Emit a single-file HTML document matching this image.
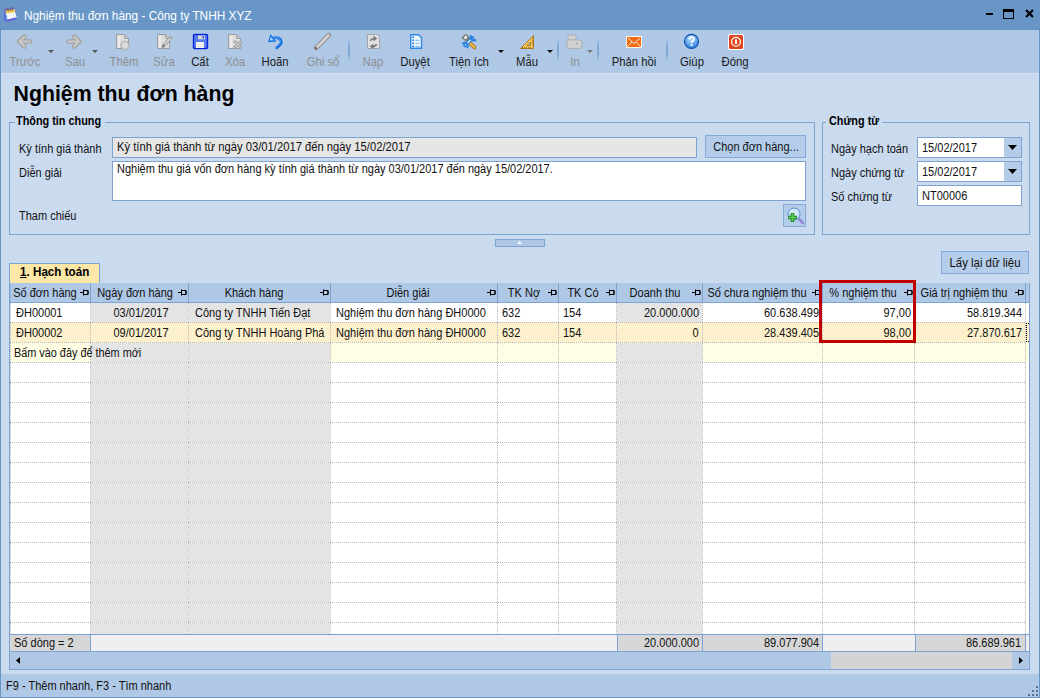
<!DOCTYPE html>
<html><head><meta charset="utf-8"><title>Nghiệm thu đơn hàng</title>
<style>
html,body{margin:0;padding:0;}
body{width:1040px;height:698px;overflow:hidden;position:relative;background:#cadbf0;font-family:"Liberation Sans", sans-serif;}
div{position:absolute;}
.t{white-space:nowrap;}
u{text-decoration:underline;}
</style></head><body>
<div style="left:0px;top:0px;width:1040px;height:30px;background:#6897c7"></div>
<div style="left:0px;top:29px;width:1040px;height:1px;background:#6192c4"></div>
<div style="left:0px;top:30px;width:1px;height:668px;background:#6897c7"></div>
<div style="left:1039px;top:30px;width:1px;height:668px;background:#6897c7"></div>
<div style="left:1px;top:30px;width:1038px;height:43px;background:#aec8e6"></div>
<div style="left:1px;top:73px;width:1038px;height:1px;background:#d2e1f3"></div>
<div style="left:1px;top:674px;width:1038px;height:23px;background:#aec8e6"></div>
<div style="left:0px;top:697px;width:1040px;height:1px;background:#6897c7"></div>
<svg style="position:absolute;left:0;top:0" width="24" height="28" viewBox="0 0 24 28">
<path d="M4 9 L14.5 7.8 L17 17.5 L16 19.5 L6.5 21.8 L4 20.5 Z" fill="#6a5ed8"/>
<path d="M5.2 10.5 L14.3 9.3 L16.8 17.3 L7.2 19.6 Z" fill="#f2f7ff"/>
<path d="M5.2 10.5 L14.3 9.3 L15 12.2 L5.8 13.4 Z" fill="#f6cc40"/>
<path d="M5.2 10.5 L7.2 19.6 L6.5 21 L4.8 20 Z" fill="#4a8ce0"/>
<path d="M6.6 11.5 V8.6 Q7.5 7 8.4 8.6 V11.2 M10.6 11 V8.3 Q11.5 6.8 12.4 8.3 V10.8" stroke="#6e6e6e" stroke-width="1.1" fill="none"/>
</svg>
<div class="t" style="left:24px;top:9.92px;font-size:12.5px;line-height:12.5px;color:#fff;transform:scaleX(0.945);transform-origin:0 0;">Nghiệm thu đơn hàng - Công ty TNHH XYZ</div>
<div style="left:986px;top:13px;width:7px;height:2px;background:#000"></div>
<div style="left:1003px;top:9px;width:11px;height:10px;border:1px solid #000;border-top-width:3px;box-sizing:border-box"></div>
<svg style="position:absolute;left:1025px;top:9px" width="9" height="9" viewBox="0 0 9 9">
<path d="M1 1 L8 8 M8 1 L1 8" stroke="#000" stroke-width="2.2"/></svg>
<svg style="position:absolute;left:0;top:0" width="1040" height="73" viewBox="0 0 1040 73"><g transform="translate(16.5,34)"><path d="M13.5 7.5 H3 M8 2.5 L2.5 7.5 L8 12.5" stroke="#a3a3a3" stroke-width="4.4" stroke-linecap="round" stroke-linejoin="round" fill="none"/><path d="M13.5 7.5 H3.5 M8 2.8 L3 7.5 L8 12.2" stroke="#c9c9c9" stroke-width="2" stroke-linecap="round" stroke-linejoin="round" fill="none"/></g><g transform="translate(82,34) scale(-1,1)"><path d="M13.5 7.5 H3 M8 2.5 L2.5 7.5 L8 12.5" stroke="#a3a3a3" stroke-width="4.4" stroke-linecap="round" stroke-linejoin="round" fill="none"/><path d="M13.5 7.5 H3.5 M8 2.8 L3 7.5 L8 12.2" stroke="#c9c9c9" stroke-width="2" stroke-linecap="round" stroke-linejoin="round" fill="none"/></g><path d="M116.5 34.5 H124.5 L128.5 38.5 V48.5 H116.5 Z" fill="#dedede" stroke="#9c9c9c"/><path d="M124.5 34.5 V38.5 H128.5" fill="#c4c4c4" stroke="#9c9c9c" stroke-width="0.8"/><rect x="118" y="36" width="2" height="11" fill="#ececec"/><circle cx="125" cy="45.5" r="4.2" fill="#cfcfcf" stroke="#a8a8a8" stroke-width="1.2" stroke-dasharray="1.6 1"/><circle cx="125" cy="45.5" r="2.6" fill="#dcdcdc"/><path d="M157.5 34.5 H165.5 L169.5 38.5 V48.5 H157.5 Z" fill="#dedede" stroke="#9c9c9c"/><path d="M165.5 34.5 V38.5 H169.5" fill="#c4c4c4" stroke="#9c9c9c" stroke-width="0.8"/><rect x="159" y="36" width="2" height="11" fill="#ececec"/><path d="M163 46.5 L170.5 38" stroke="#9a9a9a" stroke-width="3.4" stroke-linecap="round"/><path d="M163.3 46 L170.3 38.3" stroke="#d8d8d8" stroke-width="1.6" stroke-linecap="round"/><circle cx="163.5" cy="45.5" r="0.9" fill="#555"/><rect x="193.5" y="34.5" width="14" height="14" rx="1" fill="#5a7cf0" stroke="#0a24d8" stroke-width="1.4"/><rect x="198" y="35.5" width="7" height="3.8" fill="#d8d8d4"/><rect x="202.5" y="36.2" width="1.6" height="2.2" fill="#2040e0"/><rect x="196" y="42" width="8" height="6" fill="#f0f0ee"/><path d="M228.5 34.5 H236.5 L240.5 38.5 V48.5 H228.5 Z" fill="#dedede" stroke="#9c9c9c"/><path d="M236.5 34.5 V38.5 H240.5" fill="#c4c4c4" stroke="#9c9c9c" stroke-width="0.8"/><rect x="230" y="36" width="2" height="11" fill="#ececec"/><path d="M234 41 L241.5 48 M241.5 41 L234 48" stroke="#9c9c9c" stroke-width="3"/><path d="M234.5 41.5 L241 47.5 M241 41.5 L234.5 47.5" stroke="#cacaca" stroke-width="1.2"/><path d="M272.5 38.5 Q275 37.3 277.5 37.8 Q281.3 38.8 281.3 42.3 Q281.3 44.5 276.8 47.8" stroke="#1a72e0" stroke-width="2.8" fill="none" stroke-linecap="round"/><path d="M272.8 38.3 Q275 37.6 277.5 38.2 Q280.3 39 280.5 42" stroke="#5aa8f8" stroke-width="1" fill="none"/><path d="M268 42.3 L270.6 34 L276.3 41.5 Z" fill="#1a72e0"/><path d="M269.8 40.6 L270.9 36.6 L273.5 40.3 Z" fill="#a8d4ff"/><path d="M316 48 L329 35" stroke="#9a9a9a" stroke-width="4.6" stroke-linecap="round"/><path d="M316.5 47.5 L328.5 35.5" stroke="#d6d6d6" stroke-width="2.4" stroke-linecap="round"/><path d="M315 49 L317.5 48.5 L315.5 46.5 Z" fill="#444"/><path d="M367.5 34.5 H377 L379.5 37 V48.5 H367.5 Z" fill="#e0e0e0" stroke="#a4a4a4"/><path d="M370.5 41 Q371 38.5 375 38.5 M373.5 36.5 L376 38.5 L373.5 40.5 M376.5 44 Q376 46.5 372 46.5 M373.5 44.5 L371 46.5 L373.5 48" stroke="#7a7a7a" stroke-width="1.6" fill="none"/><path d="M410.7 34.7 H418.5 L421.5 37.7 V48.3 H410.7 Z" fill="#eef7ff" stroke="#2e8ae0" stroke-width="1.4"/><path d="M412.3 37.2h1.8M412.3 40.2h1.8M412.3 43.2h1.8M412.3 46.2h1.8" stroke="#1c78d8" stroke-width="1.6"/><path d="M415.5 40.3h4M415.5 43.3h4M415.5 46.3h4" stroke="#7ab8f0" stroke-width="1"/><path d="M467.5 40.5 L474.5 47.5" stroke="#a86a10" stroke-width="3.6" stroke-linecap="round"/><path d="M467.5 40.5 L474.5 47.5" stroke="#f2c040" stroke-width="1.8" stroke-linecap="round"/><path d="M461.5 38 L465 34 L468.5 35.5 L470 39 L466.5 42 Z" fill="#7a7a7a"/><path d="M463.5 38 L465.5 35.5 L467.5 36.5 L466 39.5 Z" fill="#f0f0f0"/><path d="M465 45.5 L472.5 38" stroke="#2a7fe0" stroke-width="3.6" stroke-linecap="round"/><path d="M465.2 45.3 L472.3 38.2" stroke="#c8ecff" stroke-width="1.6"/><path d="M471.5 35.5 A3 3 0 1 0 476 39.5" stroke="#2a7fe0" stroke-width="2" fill="none"/><path d="M467 48 A3 3 0 1 0 462.2 44" stroke="#2a7fe0" stroke-width="2" fill="none"/><path d="M520.5 48.5 L533.5 35.5 V48.5 Z" fill="#f2c350" stroke="#b07820" stroke-width="1"/><path d="M527 45.5 L530.5 42 V45.5 Z" fill="#aec8e6" stroke="#a06a18" stroke-width="0.8"/><path d="M522.5 48.5v-1.4M524.5 48.5v-1.4M526.5 48.5v-1.4M528.5 48.5v-1.4M530.5 48.5v-1.4M533.5 38.5h-1.4M533.5 40.5h-1.4M533.5 42.5h-1.4M533.5 44.5h-1.4" stroke="#9a6418" stroke-width="0.9"/><rect x="568" y="35" width="8" height="5" rx="1" fill="#d2d2d2" stroke="#aaa" stroke-width="0.8"/><path d="M568.5 40 H579 Q582 40 582 43 V46.5 Q582 48.5 580 48.5 H569.5 Q567 48.5 567 46 V42 Q567 40 568.5 40 Z" fill="#d0d0d0" stroke="#aaa" stroke-width="0.8"/><circle cx="576.5" cy="43.5" r="0.8" fill="#999"/><rect x="626" y="36" width="16" height="12" fill="#fff6ee"/><rect x="627" y="37" width="14" height="10" fill="#f06c14"/><path d="M628 38 L634 43.5 L640 38 M627.5 46.5 L632 42 M640.5 46.5 L636 42" stroke="#fff3e8" stroke-width="0.9" fill="none"/><defs><radialGradient id="hg" cx="45%" cy="30%" r="70%"><stop offset="0" stop-color="#b8e0ff"/><stop offset="1" stop-color="#3280e0"/></radialGradient></defs><circle cx="691.5" cy="41.4" r="7" fill="url(#hg)" stroke="#0a4eb0" stroke-width="1.2"/><path d="M689.2 39.3 Q689.2 37 691.6 37 Q694 37 694 39.1 Q694 40.5 692.3 41.3 Q691.6 41.7 691.6 43" stroke="#fff" stroke-width="1.7" fill="none"/><rect x="690.7" y="44.2" width="1.8" height="1.8" fill="#fff"/><rect x="728" y="34" width="16" height="16" rx="1.5" fill="#fff"/><rect x="729" y="35" width="14" height="14" rx="1.5" fill="#e0461e"/><circle cx="736" cy="41.8" r="4.4" fill="none" stroke="#fff" stroke-width="1.2"/><rect x="735" y="39.3" width="2" height="4.6" fill="#fff"/></svg>
<div class="t" style="left:-175.3px;width:400px;text-align:center;top:55.99px;font-size:12.3px;line-height:12.3px;color:#8f8f8f;transform:scaleX(0.92);transform-origin:50% 0;">Trước</div>
<div class="t" style="left:-125px;width:400px;text-align:center;top:55.99px;font-size:12.3px;line-height:12.3px;color:#8f8f8f;transform:scaleX(0.92);transform-origin:50% 0;">Sau</div>
<div class="t" style="left:-75.6px;width:400px;text-align:center;top:55.99px;font-size:12.3px;line-height:12.3px;color:#8f8f8f;transform:scaleX(0.92);transform-origin:50% 0;">Thêm</div>
<div class="t" style="left:-35.599999999999994px;width:400px;text-align:center;top:55.99px;font-size:12.3px;line-height:12.3px;color:#8f8f8f;transform:scaleX(0.92);transform-origin:50% 0;">Sửa</div>
<div class="t" style="left:-0.5px;width:400px;text-align:center;top:55.99px;font-size:12.3px;line-height:12.3px;color:#1b1b1b;transform:scaleX(0.92);transform-origin:50% 0;">Cất</div>
<div class="t" style="left:34.75px;width:400px;text-align:center;top:55.99px;font-size:12.3px;line-height:12.3px;color:#8f8f8f;transform:scaleX(0.92);transform-origin:50% 0;">Xóa</div>
<div class="t" style="left:75px;width:400px;text-align:center;top:55.99px;font-size:12.3px;line-height:12.3px;color:#1b1b1b;transform:scaleX(0.92);transform-origin:50% 0;">Hoãn</div>
<div class="t" style="left:122.5px;width:400px;text-align:center;top:55.99px;font-size:12.3px;line-height:12.3px;color:#8f8f8f;transform:scaleX(0.92);transform-origin:50% 0;">Ghi sổ</div>
<div class="t" style="left:173px;width:400px;text-align:center;top:55.99px;font-size:12.3px;line-height:12.3px;color:#8f8f8f;transform:scaleX(0.92);transform-origin:50% 0;">Nạp</div>
<div class="t" style="left:215.25px;width:400px;text-align:center;top:55.99px;font-size:12.3px;line-height:12.3px;color:#1b1b1b;transform:scaleX(0.92);transform-origin:50% 0;">Duyệt</div>
<div class="t" style="left:269.25px;width:400px;text-align:center;top:55.99px;font-size:12.3px;line-height:12.3px;color:#1b1b1b;transform:scaleX(0.92);transform-origin:50% 0;">Tiện ích</div>
<div class="t" style="left:326.9px;width:400px;text-align:center;top:55.99px;font-size:12.3px;line-height:12.3px;color:#1b1b1b;transform:scaleX(0.92);transform-origin:50% 0;">Mẫu</div>
<div class="t" style="left:374.5px;width:400px;text-align:center;top:55.99px;font-size:12.3px;line-height:12.3px;color:#8f8f8f;transform:scaleX(0.92);transform-origin:50% 0;">In</div>
<div class="t" style="left:434.25px;width:400px;text-align:center;top:55.99px;font-size:12.3px;line-height:12.3px;color:#1b1b1b;transform:scaleX(0.92);transform-origin:50% 0;">Phản hồi</div>
<div class="t" style="left:492.25px;width:400px;text-align:center;top:55.99px;font-size:12.3px;line-height:12.3px;color:#1b1b1b;transform:scaleX(0.92);transform-origin:50% 0;">Giúp</div>
<div class="t" style="left:535.1px;width:400px;text-align:center;top:55.99px;font-size:12.3px;line-height:12.3px;color:#1b1b1b;transform:scaleX(0.92);transform-origin:50% 0;">Đóng</div>
<svg style="position:absolute;left:48px;top:50px" width="6" height="3" viewBox="0 0 6 3"><path d="M0 0 H6 L3 3 Z" fill="#555"/></svg>
<svg style="position:absolute;left:92px;top:50px" width="6" height="3" viewBox="0 0 6 3"><path d="M0 0 H6 L3 3 Z" fill="#555"/></svg>
<svg style="position:absolute;left:498px;top:50px" width="6" height="3" viewBox="0 0 6 3"><path d="M0 0 H6 L3 3 Z" fill="#111"/></svg>
<svg style="position:absolute;left:547px;top:50px" width="6" height="3" viewBox="0 0 6 3"><path d="M0 0 H6 L3 3 Z" fill="#111"/></svg>
<svg style="position:absolute;left:587px;top:50px" width="6" height="3" viewBox="0 0 6 3"><path d="M0 0 H6 L3 3 Z" fill="#777"/></svg>
<div style="left:348px;top:39px;width:2px;height:22px;background:linear-gradient(#aec8e6,#7ea8d8 30%,#7ea8d8 70%,#aec8e6)"></div>
<div style="left:557px;top:39px;width:2px;height:22px;background:linear-gradient(#aec8e6,#7ea8d8 30%,#7ea8d8 70%,#aec8e6)"></div>
<div style="left:597px;top:39px;width:2px;height:22px;background:linear-gradient(#aec8e6,#7ea8d8 30%,#7ea8d8 70%,#aec8e6)"></div>
<div style="left:666px;top:39px;width:2px;height:22px;background:linear-gradient(#aec8e6,#7ea8d8 30%,#7ea8d8 70%,#aec8e6)"></div>
<div class="t" style="left:13.5px;top:83.97px;font-size:21.3px;line-height:21.3px;color:#000;font-weight:bold;">Nghiệm thu đơn hàng</div>
<div style="left:9px;top:122px;width:806px;height:113px;border:1px solid #7da4d3;box-sizing:border-box"></div>
<div style="left:15px;top:116px;width:90px;height:10px;background:#cadbf0"></div>
<div class="t" style="left:16.3px;top:114.84px;font-size:12px;line-height:12px;color:#000;font-weight:bold;transform:scaleX(0.905);transform-origin:0 0;">Thông tin chung</div>
<div class="t" style="left:18.8px;top:142.84px;font-size:12px;line-height:12px;color:#111;transform:scaleX(0.917);transform-origin:0 0;">Kỳ tính giá thành</div>
<div class="t" style="left:18.6px;top:166.84px;font-size:12px;line-height:12px;color:#111;transform:scaleX(0.917);transform-origin:0 0;">Diễn giải</div>
<div class="t" style="left:18.6px;top:209.84px;font-size:12px;line-height:12px;color:#111;transform:scaleX(0.917);transform-origin:0 0;">Tham chiếu</div>
<div style="left:112px;top:137px;width:585px;height:21px;background:#e6e6e6;border:1px solid #7fa2cf;box-sizing:border-box"></div>
<div class="t" style="left:116.5px;top:140.84px;font-size:12px;line-height:12px;color:#111;transform:scaleX(0.936);transform-origin:0 0;">Kỳ tính giá thành từ ngày 03/01/2017 đến ngày 15/02/2017</div>
<div style="left:705px;top:135px;width:101px;height:23px;background:#b4cdea;border:1px solid #84a9d8;box-sizing:border-box"></div>
<div class="t" style="left:555.5px;width:400px;text-align:center;top:140.84px;font-size:12px;line-height:12px;color:#111;transform:scaleX(0.917);transform-origin:50% 0;">Chọn đơn hàng...</div>
<div style="left:112px;top:161px;width:694px;height:40px;background:#fff;border:1px solid #7fa2cf;box-sizing:border-box"></div>
<div class="t" style="left:116.5px;top:162.84px;font-size:12px;line-height:12px;color:#111;transform:scaleX(0.915);transform-origin:0 0;">Nghiệm thu giá vốn đơn hàng kỳ tính giá thành từ ngày 03/01/2017 đến ngày 15/02/2017.</div>
<div style="left:783px;top:204px;width:23px;height:23px;background:#b4cdea;border:1px solid #84a9d8;box-sizing:border-box"></div>
<svg style="position:absolute;left:780px;top:200px" width="30" height="30" viewBox="780 200 30 30">
<path d="M798.5 218.5 L803 223" stroke="#9a88d8" stroke-width="2.6" stroke-linecap="round"/>
<circle cx="794" cy="214" r="6" fill="#cfe6fb" stroke="#5b8fd0" stroke-width="1"/>
<path d="M788 217.5h9M792.5 213v9" stroke="#1f8a2a" stroke-width="3.6"/>
<path d="M788.8 217.5h7.4M792.5 213.8v7.4" stroke="#5fd05a" stroke-width="1.6"/>
</svg>
<div style="left:822px;top:122px;width:208px;height:113px;border:1px solid #7da4d3;box-sizing:border-box"></div>
<div style="left:826px;top:116px;width:56px;height:10px;background:#cadbf0"></div>
<div class="t" style="left:829px;top:114.84px;font-size:12px;line-height:12px;color:#000;font-weight:bold;transform:scaleX(0.905);transform-origin:0 0;">Chứng từ</div>
<div class="t" style="left:831px;top:142.84px;font-size:12px;line-height:12px;color:#111;transform:scaleX(0.917);transform-origin:0 0;">Ngày hạch toán</div>
<div class="t" style="left:831px;top:166.84px;font-size:12px;line-height:12px;color:#111;transform:scaleX(0.917);transform-origin:0 0;">Ngày chứng từ</div>
<div class="t" style="left:831px;top:190.84px;font-size:12px;line-height:12px;color:#111;transform:scaleX(0.917);transform-origin:0 0;">Số chứng từ</div>
<div style="left:917px;top:137px;width:105px;height:21px;background:#fff;border:1px solid #7fa2cf;box-sizing:border-box"></div>
<div style="left:1004px;top:138px;width:17px;height:19px;background:#b4cce8"></div>
<svg style="position:absolute;left:1008px;top:145px" width="9" height="5" viewBox="0 0 9 5"><path d="M0 0H9L4.5 5Z" fill="#000"/></svg>
<div class="t" style="left:922px;top:141.84px;font-size:12px;line-height:12px;color:#111;transform:scaleX(0.917);transform-origin:0 0;">15/02/2017</div>
<div style="left:917px;top:161px;width:105px;height:21px;background:#fff;border:1px solid #7fa2cf;box-sizing:border-box"></div>
<div style="left:1004px;top:162px;width:17px;height:19px;background:#b4cce8"></div>
<svg style="position:absolute;left:1008px;top:169px" width="9" height="5" viewBox="0 0 9 5"><path d="M0 0H9L4.5 5Z" fill="#000"/></svg>
<div class="t" style="left:922px;top:165.84px;font-size:12px;line-height:12px;color:#111;transform:scaleX(0.917);transform-origin:0 0;">15/02/2017</div>
<div style="left:917px;top:185px;width:105px;height:21px;background:#fff;border:1px solid #7fa2cf;box-sizing:border-box"></div>
<div class="t" style="left:922px;top:189.84px;font-size:12px;line-height:12px;color:#111;transform:scaleX(0.917);transform-origin:0 0;">NT00006</div>
<div style="left:495px;top:239px;width:50px;height:8px;background:#aec8e6;border:1px solid #7da4d3;box-sizing:border-box"></div>
<svg style="position:absolute;left:517px;top:241px" width="5" height="3" viewBox="0 0 5 3"><path d="M0 3H5L2.5 0Z" fill="#fff"/></svg>
<div style="left:941px;top:251px;width:88px;height:23px;background:#b4cdea;border:1px solid #84a9d8;box-sizing:border-box"></div>
<div class="t" style="left:784.5px;width:400px;text-align:center;top:256.84px;font-size:12px;line-height:12px;color:#111;transform:scaleX(0.95);transform-origin:50% 0;">Lấy lại dữ liệu</div>
<div style="left:9px;top:263px;width:91px;height:21px;background:#fde7a6;border:1px solid #7da4d3;border-bottom:none;box-sizing:border-box"></div>
<div class="t" style="left:20.3px;top:265.93px;font-size:12.6px;line-height:12.6px;color:#000;font-weight:bold;transform:scaleX(0.925);transform-origin:0 0;"><u>1</u>. Hạch toán</div>
<div style="left:9px;top:283px;width:1021px;height:387px;border:1px solid #7da4d3;box-sizing:border-box;background:#fff"></div>
<div style="left:10px;top:283px;width:1019px;height:19px;background:#aec8e6"></div>
<div style="left:10px;top:302px;width:1019px;height:1px;background:#7da4d3"></div>
<div class="t" style="left:-155.3px;width:400px;text-align:center;top:286.84px;font-size:12px;line-height:12px;color:#111;transform:scaleX(0.917);transform-origin:50% 0;">Số đơn hàng</div>
<svg style="position:absolute;left:80px;top:288px" width="9" height="9" viewBox="0 0 9 9"><path d="M0 4.5H3M3.5 1.5V7.5M3.5 2.5H8V6.5H3.5M8 2.5V6.5" stroke="#000" stroke-width="1" fill="none"/></svg>
<div style="left:90px;top:283px;width:1px;height:19px;background:#7da4d3"></div>
<div class="t" style="left:-65.0px;width:400px;text-align:center;top:286.84px;font-size:12px;line-height:12px;color:#111;transform:scaleX(0.917);transform-origin:50% 0;">Ngày đơn hàng</div>
<svg style="position:absolute;left:178px;top:288px" width="9" height="9" viewBox="0 0 9 9"><path d="M0 4.5H3M3.5 1.5V7.5M3.5 2.5H8V6.5H3.5M8 2.5V6.5" stroke="#000" stroke-width="1" fill="none"/></svg>
<div style="left:188px;top:283px;width:1px;height:19px;background:#7da4d3"></div>
<div class="t" style="left:54.400000000000006px;width:400px;text-align:center;top:286.84px;font-size:12px;line-height:12px;color:#111;transform:scaleX(0.917);transform-origin:50% 0;">Khách hàng</div>
<svg style="position:absolute;left:320px;top:288px" width="9" height="9" viewBox="0 0 9 9"><path d="M0 4.5H3M3.5 1.5V7.5M3.5 2.5H8V6.5H3.5M8 2.5V6.5" stroke="#000" stroke-width="1" fill="none"/></svg>
<div style="left:330px;top:283px;width:1px;height:19px;background:#7da4d3"></div>
<div class="t" style="left:208.0px;width:400px;text-align:center;top:286.84px;font-size:12px;line-height:12px;color:#111;transform:scaleX(0.917);transform-origin:50% 0;">Diễn giải</div>
<svg style="position:absolute;left:487px;top:288px" width="9" height="9" viewBox="0 0 9 9"><path d="M0 4.5H3M3.5 1.5V7.5M3.5 2.5H8V6.5H3.5M8 2.5V6.5" stroke="#000" stroke-width="1" fill="none"/></svg>
<div style="left:497px;top:283px;width:1px;height:19px;background:#7da4d3"></div>
<div class="t" style="left:323.5px;width:400px;text-align:center;top:286.84px;font-size:12px;line-height:12px;color:#111;transform:scaleX(0.917);transform-origin:50% 0;">TK Nợ</div>
<svg style="position:absolute;left:548px;top:288px" width="9" height="9" viewBox="0 0 9 9"><path d="M0 4.5H3M3.5 1.5V7.5M3.5 2.5H8V6.5H3.5M8 2.5V6.5" stroke="#000" stroke-width="1" fill="none"/></svg>
<div style="left:558px;top:283px;width:1px;height:19px;background:#7da4d3"></div>
<div class="t" style="left:383.20000000000005px;width:400px;text-align:center;top:286.84px;font-size:12px;line-height:12px;color:#111;transform:scaleX(0.917);transform-origin:50% 0;">TK Có</div>
<svg style="position:absolute;left:606px;top:288px" width="9" height="9" viewBox="0 0 9 9"><path d="M0 4.5H3M3.5 1.5V7.5M3.5 2.5H8V6.5H3.5M8 2.5V6.5" stroke="#000" stroke-width="1" fill="none"/></svg>
<div style="left:616px;top:283px;width:1px;height:19px;background:#7da4d3"></div>
<div class="t" style="left:454.5px;width:400px;text-align:center;top:286.84px;font-size:12px;line-height:12px;color:#111;transform:scaleX(0.917);transform-origin:50% 0;">Doanh thu</div>
<svg style="position:absolute;left:692px;top:288px" width="9" height="9" viewBox="0 0 9 9"><path d="M0 4.5H3M3.5 1.5V7.5M3.5 2.5H8V6.5H3.5M8 2.5V6.5" stroke="#000" stroke-width="1" fill="none"/></svg>
<div style="left:702px;top:283px;width:1px;height:19px;background:#7da4d3"></div>
<div class="t" style="left:557.0px;width:400px;text-align:center;top:286.84px;font-size:12px;line-height:12px;color:#111;transform:scaleX(0.917);transform-origin:50% 0;">Số chưa nghiệm thu</div>
<svg style="position:absolute;left:812px;top:288px" width="9" height="9" viewBox="0 0 9 9"><path d="M0 4.5H3M3.5 1.5V7.5M3.5 2.5H8V6.5H3.5M8 2.5V6.5" stroke="#000" stroke-width="1" fill="none"/></svg>
<div style="left:822px;top:283px;width:1px;height:19px;background:#7da4d3"></div>
<div class="t" style="left:662.8px;width:400px;text-align:center;top:286.84px;font-size:12px;line-height:12px;color:#111;transform:scaleX(0.917);transform-origin:50% 0;">% nghiệm thu</div>
<svg style="position:absolute;left:904px;top:288px" width="9" height="9" viewBox="0 0 9 9"><path d="M0 4.5H3M3.5 1.5V7.5M3.5 2.5H8V6.5H3.5M8 2.5V6.5" stroke="#000" stroke-width="1" fill="none"/></svg>
<div style="left:914px;top:283px;width:1px;height:19px;background:#7da4d3"></div>
<div class="t" style="left:763.9px;width:400px;text-align:center;top:286.84px;font-size:12px;line-height:12px;color:#111;transform:scaleX(0.917);transform-origin:50% 0;">Giá trị nghiệm thu</div>
<svg style="position:absolute;left:1015px;top:288px" width="9" height="9" viewBox="0 0 9 9"><path d="M0 4.5H3M3.5 1.5V7.5M3.5 2.5H8V6.5H3.5M8 2.5V6.5" stroke="#000" stroke-width="1" fill="none"/></svg>
<div style="left:1025px;top:283px;width:1px;height:19px;background:#7da4d3"></div>
<div style="left:10px;top:303px;width:1019px;height:19px;background:#fff"></div>
<div style="left:91px;top:303px;width:97px;height:19px;background:#e4e4e4"></div>
<div style="left:189px;top:303px;width:141px;height:19px;background:#e4e4e4"></div>
<div style="left:617px;top:303px;width:85px;height:19px;background:#e4e4e4"></div>
<div style="left:10px;top:322px;width:1019px;height:21px;background:#fdf0cc"></div>
<div style="left:10px;top:342px;width:1019px;height:20px;background:#fffde4"></div>
<div style="left:91px;top:343px;width:97px;height:19px;background:#e4e4e4"></div>
<div style="left:189px;top:343px;width:141px;height:19px;background:#e4e4e4"></div>
<div style="left:617px;top:343px;width:85px;height:19px;background:#e4e4e4"></div>
<div style="left:10px;top:362px;width:1019px;height:20px;background:#fff"></div>
<div style="left:91px;top:363px;width:97px;height:19px;background:#e4e4e4"></div>
<div style="left:189px;top:363px;width:141px;height:19px;background:#e4e4e4"></div>
<div style="left:617px;top:363px;width:85px;height:19px;background:#e4e4e4"></div>
<div style="left:10px;top:382px;width:1019px;height:20px;background:#fff"></div>
<div style="left:91px;top:383px;width:97px;height:19px;background:#e4e4e4"></div>
<div style="left:189px;top:383px;width:141px;height:19px;background:#e4e4e4"></div>
<div style="left:617px;top:383px;width:85px;height:19px;background:#e4e4e4"></div>
<div style="left:10px;top:402px;width:1019px;height:20px;background:#fff"></div>
<div style="left:91px;top:403px;width:97px;height:19px;background:#e4e4e4"></div>
<div style="left:189px;top:403px;width:141px;height:19px;background:#e4e4e4"></div>
<div style="left:617px;top:403px;width:85px;height:19px;background:#e4e4e4"></div>
<div style="left:10px;top:422px;width:1019px;height:20px;background:#fff"></div>
<div style="left:91px;top:423px;width:97px;height:19px;background:#e4e4e4"></div>
<div style="left:189px;top:423px;width:141px;height:19px;background:#e4e4e4"></div>
<div style="left:617px;top:423px;width:85px;height:19px;background:#e4e4e4"></div>
<div style="left:10px;top:442px;width:1019px;height:20px;background:#fff"></div>
<div style="left:91px;top:443px;width:97px;height:19px;background:#e4e4e4"></div>
<div style="left:189px;top:443px;width:141px;height:19px;background:#e4e4e4"></div>
<div style="left:617px;top:443px;width:85px;height:19px;background:#e4e4e4"></div>
<div style="left:10px;top:462px;width:1019px;height:20px;background:#fff"></div>
<div style="left:91px;top:463px;width:97px;height:19px;background:#e4e4e4"></div>
<div style="left:189px;top:463px;width:141px;height:19px;background:#e4e4e4"></div>
<div style="left:617px;top:463px;width:85px;height:19px;background:#e4e4e4"></div>
<div style="left:10px;top:482px;width:1019px;height:20px;background:#fff"></div>
<div style="left:91px;top:483px;width:97px;height:19px;background:#e4e4e4"></div>
<div style="left:189px;top:483px;width:141px;height:19px;background:#e4e4e4"></div>
<div style="left:617px;top:483px;width:85px;height:19px;background:#e4e4e4"></div>
<div style="left:10px;top:502px;width:1019px;height:20px;background:#fff"></div>
<div style="left:91px;top:503px;width:97px;height:19px;background:#e4e4e4"></div>
<div style="left:189px;top:503px;width:141px;height:19px;background:#e4e4e4"></div>
<div style="left:617px;top:503px;width:85px;height:19px;background:#e4e4e4"></div>
<div style="left:10px;top:522px;width:1019px;height:20px;background:#fff"></div>
<div style="left:91px;top:523px;width:97px;height:19px;background:#e4e4e4"></div>
<div style="left:189px;top:523px;width:141px;height:19px;background:#e4e4e4"></div>
<div style="left:617px;top:523px;width:85px;height:19px;background:#e4e4e4"></div>
<div style="left:10px;top:542px;width:1019px;height:20px;background:#fff"></div>
<div style="left:91px;top:543px;width:97px;height:19px;background:#e4e4e4"></div>
<div style="left:189px;top:543px;width:141px;height:19px;background:#e4e4e4"></div>
<div style="left:617px;top:543px;width:85px;height:19px;background:#e4e4e4"></div>
<div style="left:10px;top:562px;width:1019px;height:20px;background:#fff"></div>
<div style="left:91px;top:563px;width:97px;height:19px;background:#e4e4e4"></div>
<div style="left:189px;top:563px;width:141px;height:19px;background:#e4e4e4"></div>
<div style="left:617px;top:563px;width:85px;height:19px;background:#e4e4e4"></div>
<div style="left:10px;top:582px;width:1019px;height:20px;background:#fff"></div>
<div style="left:91px;top:583px;width:97px;height:19px;background:#e4e4e4"></div>
<div style="left:189px;top:583px;width:141px;height:19px;background:#e4e4e4"></div>
<div style="left:617px;top:583px;width:85px;height:19px;background:#e4e4e4"></div>
<div style="left:10px;top:602px;width:1019px;height:20px;background:#fff"></div>
<div style="left:91px;top:603px;width:97px;height:19px;background:#e4e4e4"></div>
<div style="left:189px;top:603px;width:141px;height:19px;background:#e4e4e4"></div>
<div style="left:617px;top:603px;width:85px;height:19px;background:#e4e4e4"></div>
<div style="left:10px;top:622px;width:1019px;height:12px;background:#fff"></div>
<div style="left:91px;top:623px;width:97px;height:11px;background:#e4e4e4"></div>
<div style="left:189px;top:623px;width:141px;height:11px;background:#e4e4e4"></div>
<div style="left:617px;top:623px;width:85px;height:11px;background:#e4e4e4"></div>
<div style="left:10px;top:322px;width:1016px;height:1px;background-image:repeating-linear-gradient(90deg,#b6b6b6 0 1px,transparent 1px 2px)"></div>
<div style="left:10px;top:342px;width:1016px;height:1px;background-image:repeating-linear-gradient(90deg,#b6b6b6 0 1px,transparent 1px 2px)"></div>
<div style="left:10px;top:362px;width:1016px;height:1px;background-image:repeating-linear-gradient(90deg,#b6b6b6 0 1px,transparent 1px 2px)"></div>
<div style="left:10px;top:382px;width:1016px;height:1px;background-image:repeating-linear-gradient(90deg,#b6b6b6 0 1px,transparent 1px 2px)"></div>
<div style="left:10px;top:402px;width:1016px;height:1px;background-image:repeating-linear-gradient(90deg,#b6b6b6 0 1px,transparent 1px 2px)"></div>
<div style="left:10px;top:422px;width:1016px;height:1px;background-image:repeating-linear-gradient(90deg,#b6b6b6 0 1px,transparent 1px 2px)"></div>
<div style="left:10px;top:442px;width:1016px;height:1px;background-image:repeating-linear-gradient(90deg,#b6b6b6 0 1px,transparent 1px 2px)"></div>
<div style="left:10px;top:462px;width:1016px;height:1px;background-image:repeating-linear-gradient(90deg,#b6b6b6 0 1px,transparent 1px 2px)"></div>
<div style="left:10px;top:482px;width:1016px;height:1px;background-image:repeating-linear-gradient(90deg,#b6b6b6 0 1px,transparent 1px 2px)"></div>
<div style="left:10px;top:502px;width:1016px;height:1px;background-image:repeating-linear-gradient(90deg,#b6b6b6 0 1px,transparent 1px 2px)"></div>
<div style="left:10px;top:522px;width:1016px;height:1px;background-image:repeating-linear-gradient(90deg,#b6b6b6 0 1px,transparent 1px 2px)"></div>
<div style="left:10px;top:542px;width:1016px;height:1px;background-image:repeating-linear-gradient(90deg,#b6b6b6 0 1px,transparent 1px 2px)"></div>
<div style="left:10px;top:562px;width:1016px;height:1px;background-image:repeating-linear-gradient(90deg,#b6b6b6 0 1px,transparent 1px 2px)"></div>
<div style="left:10px;top:582px;width:1016px;height:1px;background-image:repeating-linear-gradient(90deg,#b6b6b6 0 1px,transparent 1px 2px)"></div>
<div style="left:10px;top:602px;width:1016px;height:1px;background-image:repeating-linear-gradient(90deg,#b6b6b6 0 1px,transparent 1px 2px)"></div>
<div style="left:10px;top:622px;width:1016px;height:1px;background-image:repeating-linear-gradient(90deg,#b6b6b6 0 1px,transparent 1px 2px)"></div>
<div style="left:10px;top:342px;width:1016px;height:1px;background-image:repeating-linear-gradient(90deg,#b6b6b6 0 1px,transparent 1px 2px)"></div>
<div style="left:10px;top:303px;width:1px;height:331px;background-image:repeating-linear-gradient(180deg,#b6b6b6 0 1px,transparent 1px 2px)"></div>
<div style="left:90px;top:303px;width:1px;height:331px;background-image:repeating-linear-gradient(180deg,#b6b6b6 0 1px,transparent 1px 2px)"></div>
<div style="left:188px;top:303px;width:1px;height:331px;background-image:repeating-linear-gradient(180deg,#b6b6b6 0 1px,transparent 1px 2px)"></div>
<div style="left:330px;top:303px;width:1px;height:331px;background-image:repeating-linear-gradient(180deg,#b6b6b6 0 1px,transparent 1px 2px)"></div>
<div style="left:497px;top:303px;width:1px;height:331px;background-image:repeating-linear-gradient(180deg,#b6b6b6 0 1px,transparent 1px 2px)"></div>
<div style="left:558px;top:303px;width:1px;height:331px;background-image:repeating-linear-gradient(180deg,#b6b6b6 0 1px,transparent 1px 2px)"></div>
<div style="left:616px;top:303px;width:1px;height:331px;background-image:repeating-linear-gradient(180deg,#b6b6b6 0 1px,transparent 1px 2px)"></div>
<div style="left:702px;top:303px;width:1px;height:331px;background-image:repeating-linear-gradient(180deg,#b6b6b6 0 1px,transparent 1px 2px)"></div>
<div style="left:822px;top:303px;width:1px;height:331px;background-image:repeating-linear-gradient(180deg,#b6b6b6 0 1px,transparent 1px 2px)"></div>
<div style="left:914px;top:303px;width:1px;height:331px;background-image:repeating-linear-gradient(180deg,#b6b6b6 0 1px,transparent 1px 2px)"></div>
<div style="left:1025px;top:303px;width:1px;height:331px;background-image:repeating-linear-gradient(180deg,#b6b6b6 0 1px,transparent 1px 2px)"></div>
<div class="t" style="left:16px;top:306.84px;font-size:12px;line-height:12px;color:#111;transform:scaleX(0.917);transform-origin:0 0;">ĐH00001</div>
<div class="t" style="left:-59.5px;width:400px;text-align:center;top:306.84px;font-size:12px;line-height:12px;color:#111;transform:scaleX(0.917);transform-origin:50% 0;">03/01/2017</div>
<div style="left:189px;top:303px;width:141px;height:19px;overflow:hidden">
<div class="t" style="left:6px;top:3.84px;font-size:12px;line-height:12px;color:#111;transform:scaleX(0.917);transform-origin:0 0;">Công ty TNHH Tiến Đạt</div>
</div>
<div class="t" style="left:336px;top:306.84px;font-size:12px;line-height:12px;color:#111;transform:scaleX(0.917);transform-origin:0 0;">Nghiệm thu đơn hàng ĐH0000</div>
<div class="t" style="left:502px;top:306.84px;font-size:12px;line-height:12px;color:#111;transform:scaleX(0.917);transform-origin:0 0;">632</div>
<div class="t" style="left:563px;top:306.84px;font-size:12px;line-height:12px;color:#111;transform:scaleX(0.917);transform-origin:0 0;">154</div>
<div class="t" style="right:341px;top:306.84px;font-size:12px;line-height:12px;color:#111;transform:scaleX(0.917);transform-origin:100% 0;">20.000.000</div>
<div class="t" style="right:221px;top:306.84px;font-size:12px;line-height:12px;color:#111;transform:scaleX(0.917);transform-origin:100% 0;">60.638.499</div>
<div class="t" style="right:129px;top:306.84px;font-size:12px;line-height:12px;color:#111;transform:scaleX(0.917);transform-origin:100% 0;">97,00</div>
<div class="t" style="right:18px;top:306.84px;font-size:12px;line-height:12px;color:#111;transform:scaleX(0.917);transform-origin:100% 0;">58.819.344</div>
<div class="t" style="left:16px;top:326.84px;font-size:12px;line-height:12px;color:#111;transform:scaleX(0.917);transform-origin:0 0;">ĐH00002</div>
<div class="t" style="left:-59.5px;width:400px;text-align:center;top:326.84px;font-size:12px;line-height:12px;color:#111;transform:scaleX(0.917);transform-origin:50% 0;">09/01/2017</div>
<div style="left:189px;top:323px;width:141px;height:19px;overflow:hidden">
<div class="t" style="left:6px;top:3.84px;font-size:12px;line-height:12px;color:#111;transform:scaleX(0.917);transform-origin:0 0;">Công ty TNHH Hoàng Phá</div>
</div>
<div class="t" style="left:336px;top:326.84px;font-size:12px;line-height:12px;color:#111;transform:scaleX(0.917);transform-origin:0 0;">Nghiệm thu đơn hàng ĐH0000</div>
<div class="t" style="left:502px;top:326.84px;font-size:12px;line-height:12px;color:#111;transform:scaleX(0.917);transform-origin:0 0;">632</div>
<div class="t" style="left:563px;top:326.84px;font-size:12px;line-height:12px;color:#111;transform:scaleX(0.917);transform-origin:0 0;">154</div>
<div class="t" style="right:341px;top:326.84px;font-size:12px;line-height:12px;color:#111;transform:scaleX(0.917);transform-origin:100% 0;">0</div>
<div class="t" style="right:221px;top:326.84px;font-size:12px;line-height:12px;color:#111;transform:scaleX(0.917);transform-origin:100% 0;">28.439.405</div>
<div class="t" style="right:129px;top:326.84px;font-size:12px;line-height:12px;color:#111;transform:scaleX(0.917);transform-origin:100% 0;">98,00</div>
<div class="t" style="right:18px;top:326.84px;font-size:12px;line-height:12px;color:#111;transform:scaleX(0.917);transform-origin:100% 0;">27.870.617</div>
<div class="t" style="left:13.5px;top:346.84px;font-size:12px;line-height:12px;color:#111;transform:scaleX(0.905);transform-origin:0 0;">Bấm vào đây để thêm mới</div>
<div style="left:1026px;top:323px;width:1px;height:19px;background-image:repeating-linear-gradient(180deg,#000 0 1px,transparent 1px 2px)"></div>
<div style="left:1026px;top:323px;width:3px;height:1px;background-image:repeating-linear-gradient(90deg,#000 0 1px,transparent 1px 2px)"></div>
<div style="left:1026px;top:341px;width:3px;height:1px;background-image:repeating-linear-gradient(90deg,#000 0 1px,transparent 1px 2px)"></div>
<div style="left:10px;top:283px;width:1px;height:19px;background:#94b5dc"></div>
<div style="left:819px;top:280px;width:97px;height:63px;border:3px solid #c00000;box-sizing:border-box"></div>
<div style="left:10px;top:634px;width:1019px;height:1px;background:#7da4d3"></div>
<div style="left:10px;top:635px;width:1019px;height:16px;background:#efefef"></div>
<div style="left:10px;top:635px;width:80px;height:16px;background:#d6d6d6"></div>
<div style="left:617px;top:635px;width:85px;height:16px;background:#d6d6d6;border-left:1px solid #7da4d3;box-sizing:border-box"></div>
<div style="left:702px;top:635px;width:120px;height:16px;background:#d6d6d6;border-left:1px solid #7da4d3;box-sizing:border-box"></div>
<div style="left:915px;top:635px;width:110px;height:16px;background:#d6d6d6;border-left:1px solid #7da4d3;box-sizing:border-box"></div>
<div style="left:90px;top:635px;width:1px;height:16px;background:#7da4d3"></div>
<div style="left:822px;top:635px;width:1px;height:16px;background:#7da4d3"></div>
<div style="left:1025px;top:635px;width:1px;height:16px;background:#7da4d3"></div>
<div class="t" style="left:14px;top:636.84px;font-size:12px;line-height:12px;color:#111;transform:scaleX(0.917);transform-origin:0 0;">Số dòng = 2</div>
<div class="t" style="right:340.5px;top:636.84px;font-size:12px;line-height:12px;color:#111;transform:scaleX(0.917);transform-origin:100% 0;">20.000.000</div>
<div class="t" style="right:221px;top:636.84px;font-size:12px;line-height:12px;color:#111;transform:scaleX(0.917);transform-origin:100% 0;">89.077.904</div>
<div class="t" style="right:19px;top:636.84px;font-size:12px;line-height:12px;color:#111;transform:scaleX(0.917);transform-origin:100% 0;">86.689.961</div>
<div style="left:10px;top:651px;width:1019px;height:18px;background:#aec8e6;border-top:1px solid #7da4d3;box-sizing:border-box"></div>
<div style="left:831px;top:652px;width:181px;height:17px;background:#d4d4d4"></div>
<svg style="position:absolute;left:16px;top:657px" width="4" height="7" viewBox="0 0 4 7"><path d="M4 0V7L0 3.5Z" fill="#000"/></svg>
<svg style="position:absolute;left:1019px;top:657px" width="4" height="7" viewBox="0 0 4 7"><path d="M0 0V7L4 3.5Z" fill="#000"/></svg>
<div class="t" style="left:5.5px;top:679.84px;font-size:12px;line-height:12px;color:#111;transform:scaleX(0.917);transform-origin:0 0;">F9 - Thêm nhanh, F3 - Tìm nhanh</div>
<div style="left:1036px;top:686px;width:2px;height:2px;background:#53719a"></div>
<div style="left:1032px;top:690px;width:2px;height:2px;background:#53719a"></div>
<div style="left:1036px;top:690px;width:2px;height:2px;background:#53719a"></div>
<div style="left:1028px;top:694px;width:2px;height:2px;background:#53719a"></div>
<div style="left:1032px;top:694px;width:2px;height:2px;background:#53719a"></div>
<div style="left:1036px;top:694px;width:2px;height:2px;background:#53719a"></div>
</body></html>
